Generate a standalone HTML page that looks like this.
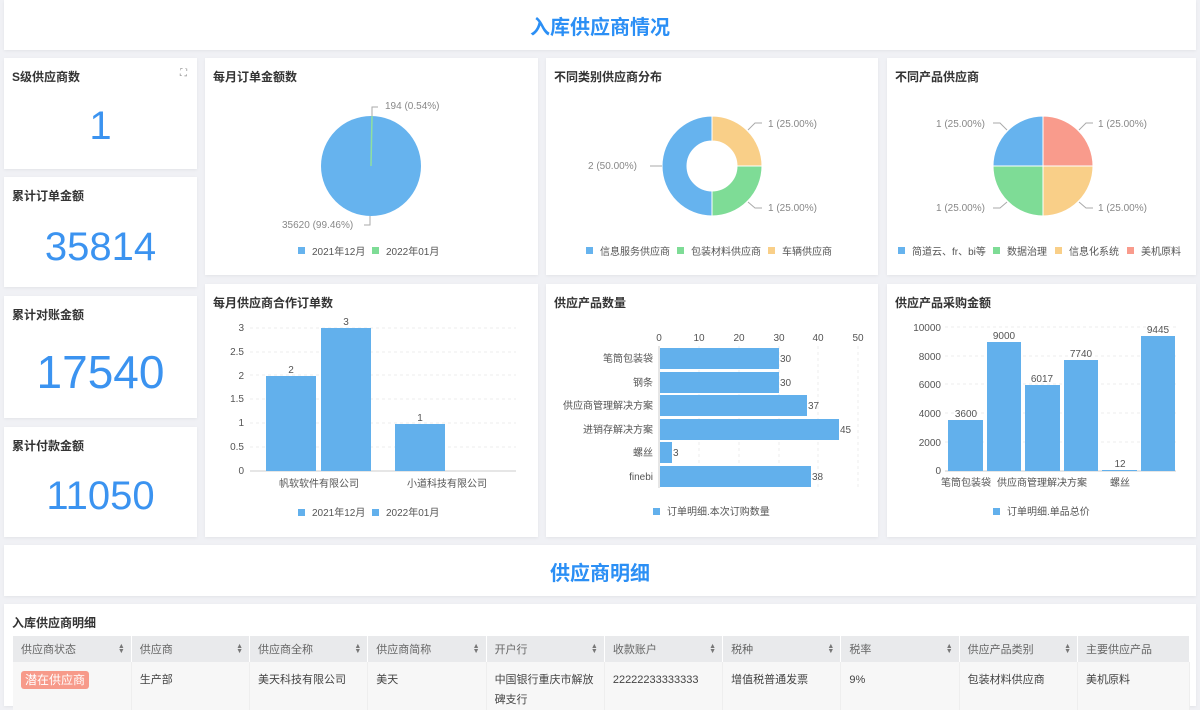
<!DOCTYPE html>
<html><head><meta charset="utf-8"><style>
body{margin:0;width:1200px;height:706px;background:#f0f1f5;overflow:hidden;position:relative;font-family:"Liberation Sans","Noto Sans CJK SC",sans-serif}
.c{position:absolute;background:#fff;box-shadow:0 1px 3px rgba(0,0,0,.06)}
.t{position:absolute;left:8px;top:10px;font-size:12px;font-weight:bold;color:#333}
.h{position:absolute;font-size:20px;font-weight:bold;color:#2b8ff5;width:100%;text-align:center}
.n{position:absolute;width:100%;text-align:center;color:#3b93f0;font-weight:300}
svg{position:absolute;left:0;top:0}
table{position:absolute;left:13px;top:636px;border-collapse:collapse;font-size:11px;color:#444;table-layout:fixed;width:1177px}
th{background:#e9eaec;font-weight:normal;color:#666;text-align:left;height:26px;padding:0 8px;border-right:1px solid #fff;position:relative}
th i{position:absolute;right:6px;top:8px;font-style:normal;font-size:7px;color:#777;line-height:5px}
td{background:#f7f7f7;vertical-align:top;padding:8px 8px 0;height:36px;border-right:1px solid #eee;line-height:20px}
</style></head><body>
<div class="c" style="left:4px;top:0;width:1192px;height:50px"><div class="h" style="top:11px">入库供应商情况</div></div>
<div class="c" style="left:4px;top:58px;width:193px;height:111px"><div class="t">S级供应商数</div><div style="position:absolute;right:10px;top:10px;font-size:10px;color:#888">⛶</div><div class="n" style="top:46px;font-size:40px">1</div></div>
<div class="c" style="left:4px;top:177px;width:193px;height:110px"><div class="t">累计订单金额</div><div class="n" style="top:48px;font-size:40px">35814</div></div>
<div class="c" style="left:4px;top:296px;width:193px;height:122px"><div class="t">累计对账金额</div><div class="n" style="top:49px;font-size:46px">17540</div></div>
<div class="c" style="left:4px;top:427px;width:193px;height:110px"><div class="t">累计付款金额</div><div class="n" style="top:47px;font-size:40px">11050</div></div>
<div class="c" style="left:205px;top:58px;width:333px;height:217px"><div class="t">每月订单金额数</div></div>
<div class="c" style="left:546px;top:58px;width:332px;height:217px"><div class="t">不同类别供应商分布</div></div>
<div class="c" style="left:887px;top:58px;width:309px;height:217px"><div class="t">不同产品供应商</div></div>
<div class="c" style="left:205px;top:284px;width:333px;height:253px"><div class="t">每月供应商合作订单数</div></div>
<div class="c" style="left:546px;top:284px;width:332px;height:253px"><div class="t">供应产品数量</div></div>
<div class="c" style="left:887px;top:284px;width:309px;height:253px"><div class="t">供应产品采购金额</div></div>
<div class="c" style="left:4px;top:545px;width:1192px;height:51px"><div class="h" style="top:12px">供应商明细</div></div>
<div class="c" style="left:4px;top:604px;width:1192px;height:102px"><div class="t" style="top:10px">入库供应商明细</div></div>
<svg width="1200" height="706" font-family="Liberation Sans, Noto Sans CJK SC, sans-serif" font-size="10" fill="#555">
<circle cx="371" cy="166" r="50" fill="#66b3ee"/>
<line x1="371" y1="166" x2="372" y2="116" stroke="#8fe0a0" stroke-width="1.5"/>
<polyline points="372,116 372,107 378,107" fill="none" stroke="#aaa"/>
<text x="385" y="109" fill="#888">194 (0.54%)</text>
<polyline points="370,216 370,225 364,225" fill="none" stroke="#aaa"/>
<text x="282" y="228" fill="#888">35620 (99.46%)</text>
<rect x="298" y="247" width="7" height="7" fill="#66b3ee"/><text x="312" y="255">2021年12月</text>
<rect x="372" y="247" width="7" height="7" fill="#7edc96"/><text x="386" y="255">2022年01月</text>
<path d="M712 116 A50 50 0 0 1 762 166 L737 166 A25 25 0 0 0 712 141Z" fill="#f9cf88" stroke="#fff"/>
<path d="M762 166 A50 50 0 0 1 712 216 L712 191 A25 25 0 0 0 737 166Z" fill="#7edc96" stroke="#fff"/>
<path d="M712 216 A50 50 0 0 1 712 116 L712 141 A25 25 0 0 0 712 191Z" fill="#66b3ee" stroke="#fff"/>
<polyline points="748,130 755,123 762,123" fill="none" stroke="#aaa"/><text x="768" y="127" fill="#888">1 (25.00%)</text>
<polyline points="748,202 755,208 762,208" fill="none" stroke="#aaa"/><text x="768" y="211" fill="#888">1 (25.00%)</text>
<line x1="650" y1="166" x2="662" y2="166" stroke="#aaa"/><text x="588" y="169" fill="#888">2 (50.00%)</text>
<rect x="586" y="247" width="7" height="7" fill="#66b3ee"/><text x="600" y="255">信息服务供应商</text>
<rect x="677" y="247" width="7" height="7" fill="#7edc96"/><text x="691" y="255">包装材料供应商</text>
<rect x="768" y="247" width="7" height="7" fill="#f9cf88"/><text x="782" y="255">车辆供应商</text>
<path d="M1043 166 L1043 116 A50 50 0 0 1 1093 166Z" fill="#f99b8c" stroke="#fff"/>
<path d="M1043 166 L1093 166 A50 50 0 0 1 1043 216Z" fill="#f9cf88" stroke="#fff"/>
<path d="M1043 166 L1043 216 A50 50 0 0 1 993 166Z" fill="#7edc96" stroke="#fff"/>
<path d="M1043 166 L993 166 A50 50 0 0 1 1043 116Z" fill="#66b3ee" stroke="#fff"/>
<polyline points="1079,130 1086,123 1093,123" fill="none" stroke="#aaa"/><text x="1098" y="127" fill="#888">1 (25.00%)</text>
<polyline points="1079,202 1086,208 1093,208" fill="none" stroke="#aaa"/><text x="1098" y="211" fill="#888">1 (25.00%)</text>
<polyline points="1007,130 1000,123 993,123" fill="none" stroke="#aaa"/><text x="936" y="127" fill="#888">1 (25.00%)</text>
<polyline points="1007,202 1000,208 993,208" fill="none" stroke="#aaa"/><text x="936" y="211" fill="#888">1 (25.00%)</text>
<rect x="898" y="247" width="7" height="7" fill="#66b3ee"/><text x="912" y="255">简道云、fr、bi等</text>
<rect x="993" y="247" width="7" height="7" fill="#7edc96"/><text x="1007" y="255">数据治理</text>
<rect x="1055" y="247" width="7" height="7" fill="#f9cf88"/><text x="1069" y="255">信息化系统</text>
<rect x="1127" y="247" width="7" height="7" fill="#f99b8c"/><text x="1141" y="255">美机原料</text>
<g stroke="#eee" stroke-dasharray="3,3"><line x1="250" x2="516" y1="328" y2="328"/><line x1="250" x2="516" y1="352" y2="352"/><line x1="250" x2="516" y1="375" y2="375"/><line x1="250" x2="516" y1="399" y2="399"/><line x1="250" x2="516" y1="423" y2="423"/><line x1="250" x2="516" y1="447" y2="447"/></g>
<line x1="250" x2="516" y1="471" y2="471" stroke="#ccc"/>
<g text-anchor="end"><text x="244" y="331">3</text><text x="244" y="355">2.5</text><text x="244" y="379">2</text><text x="244" y="402">1.5</text><text x="244" y="426">1</text><text x="244" y="450">0.5</text><text x="244" y="474">0</text></g>
<rect x="266" y="376" width="50" height="95" fill="#62b0ec"/><rect x="321" y="328" width="50" height="143" fill="#62b0ec"/><rect x="395" y="424" width="50" height="47" fill="#62b0ec"/>
<g text-anchor="middle"><text x="291" y="373">2</text><text x="346" y="325">3</text><text x="420" y="421">1</text><text x="319" y="487">帆软软件有限公司</text><text x="447" y="487">小道科技有限公司</text></g>
<rect x="298" y="509" width="7" height="7" fill="#62b0ec"/><text x="312" y="516">2021年12月</text>
<rect x="372" y="509" width="7" height="7" fill="#62b0ec"/><text x="386" y="516">2022年01月</text>
<g stroke="#eee" stroke-dasharray="3,3"><line x1="699" x2="699" y1="346" y2="488"/><line x1="739" x2="739" y1="346" y2="488"/><line x1="779" x2="779" y1="346" y2="488"/><line x1="818" x2="818" y1="346" y2="488"/><line x1="858" x2="858" y1="346" y2="488"/></g>
<line x1="659" x2="659" y1="346" y2="488" stroke="#ccc"/>
<g text-anchor="middle"><text x="659" y="341">0</text><text x="699" y="341">10</text><text x="739" y="341">20</text><text x="779" y="341">30</text><text x="818" y="341">40</text><text x="858" y="341">50</text></g>
<g fill="#62b0ec"><rect x="660" y="348" width="119" height="21"/><rect x="660" y="372" width="119" height="21"/><rect x="660" y="395" width="147" height="21"/><rect x="660" y="419" width="179" height="21"/><rect x="660" y="442" width="12" height="21"/><rect x="660" y="466" width="151" height="21"/></g>
<g text-anchor="end"><text x="653" y="362">笔筒包装袋</text><text x="653" y="386">钢条</text><text x="653" y="409">供应商管理解决方案</text><text x="653" y="433">进销存解决方案</text><text x="653" y="456">螺丝</text><text x="653" y="480">finebi</text></g>
<text x="780" y="362">30</text><text x="780" y="386">30</text><text x="808" y="409">37</text><text x="840" y="433">45</text><text x="673" y="456">3</text><text x="812" y="480">38</text>
<rect x="653" y="508" width="7" height="7" fill="#62b0ec"/><text x="667" y="515">订单明细.本次订购数量</text>
<g stroke="#eee" stroke-dasharray="3,3"><line x1="945" x2="1176" y1="327" y2="327"/><line x1="945" x2="1176" y1="356" y2="356"/><line x1="945" x2="1176" y1="384" y2="384"/><line x1="945" x2="1176" y1="413" y2="413"/><line x1="945" x2="1176" y1="442" y2="442"/></g>
<line x1="945" x2="1176" y1="471" y2="471" stroke="#ccc"/>
<g text-anchor="end"><text x="941" y="331">10000</text><text x="941" y="360">8000</text><text x="941" y="388">6000</text><text x="941" y="417">4000</text><text x="941" y="446">2000</text><text x="941" y="474">0</text></g>
<g fill="#62b0ec"><rect x="948" y="420" width="35" height="51"/><rect x="987" y="342" width="34" height="129"/><rect x="1025" y="385" width="35" height="86"/><rect x="1064" y="360" width="34" height="111"/><rect x="1102" y="470" width="35" height="1"/><rect x="1141" y="336" width="34" height="135"/></g>
<g text-anchor="middle"><text x="966" y="417">3600</text><text x="1004" y="339">9000</text><text x="1042" y="382">6017</text><text x="1081" y="357">7740</text><text x="1120" y="467">12</text><text x="1158" y="333">9445</text>
<text x="966" y="486">笔筒包装袋</text><text x="1042" y="486">供应商管理解决方案</text><text x="1120" y="486">螺丝</text></g>
<rect x="993" y="508" width="7" height="7" fill="#62b0ec"/><text x="1007" y="515">订单明细.单品总价</text>
</svg>
<table>
<tr><th>供应商状态<i>▲<br>▼</i></th><th>供应商<i>▲<br>▼</i></th><th>供应商全称<i>▲<br>▼</i></th><th>供应商简称<i>▲<br>▼</i></th><th>开户行<i>▲<br>▼</i></th><th>收款账户<i>▲<br>▼</i></th><th>税种<i>▲<br>▼</i></th><th>税率<i>▲<br>▼</i></th><th>供应产品类别<i>▲<br>▼</i></th><th style="width:95px">主要供应产品</th></tr>
<tr><td><span style="background:#f79a8a;color:#fff;padding:2px 4px;border-radius:3px;font-size:12px">潜在供应商</span></td><td>生产部</td><td>美天科技有限公司</td><td>美天</td><td>中国银行重庆市解放碑支行</td><td>22222233333333</td><td>增值税普通发票</td><td>9%</td><td>包装材料供应商</td><td>美机原料</td></tr>
</table>
</body></html>
